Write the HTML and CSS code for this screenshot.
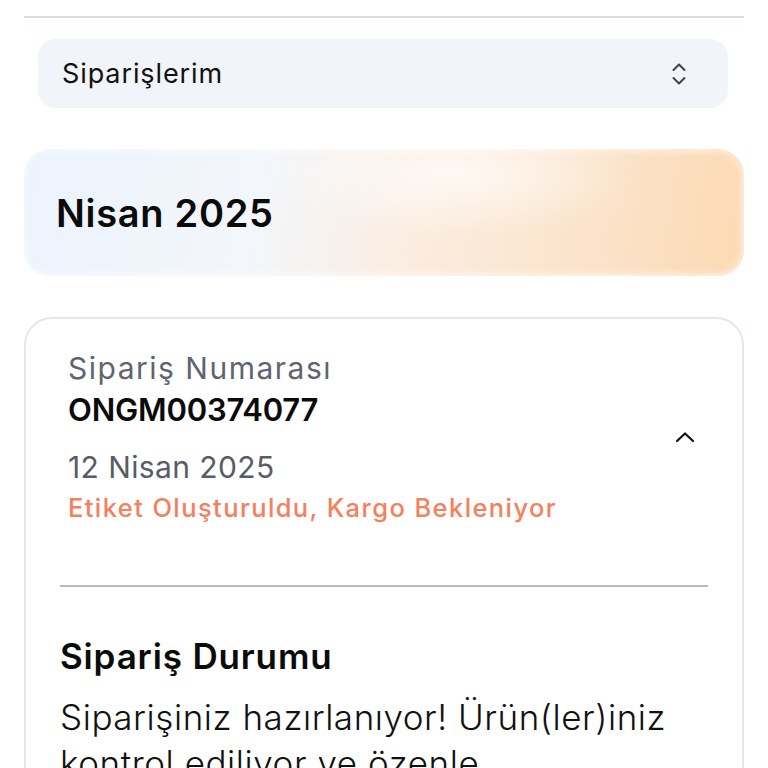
FILE: index.html
```html
<!DOCTYPE html>
<html lang="tr">
<head>
<meta charset="utf-8">
<link rel="stylesheet" href="styles.css">
</head>
<body>
<div class="page">
  <div class="topline"></div>
  <div class="select">
    <span class="select-label">Siparişlerim</span>
    <svg class="select-icon" width="18" height="26" viewBox="0 0 18 26" fill="none" stroke="#3f4247" stroke-width="2" stroke-linecap="round" stroke-linejoin="round">
      <path d="M3.5 9 L9 3.5 L14.5 9"/>
      <path d="M3.5 17 L9 22.5 L14.5 17"/>
    </svg>
  </div>
  <div class="month">
    <h2 class="month-title">Nisan 2025</h2>
  </div>
  <div class="card">
    <div class="order-head">
      <div class="order-info">
        <div class="label">Sipariş Numarası</div>
        <div class="order-no">ONGM00374077</div>
        <div class="date">12 Nisan 2025</div>
        <div class="state">Etiket Oluşturuldu, Kargo Bekleniyor</div>
      </div>
      <svg class="toggle" width="22" height="14" viewBox="0 0 22 14" fill="none" stroke="#111" stroke-width="2.2" stroke-linecap="round" stroke-linejoin="round">
        <path d="M3 11 L11 3.5 L19 11"/>
      </svg>
    </div>
    <div class="divider"></div>
    <div class="status">
      <h3 class="status-title">Sipariş Durumu</h3>
      <p class="status-text">Siparişiniz hazırlanıyor! Ürün(ler)iniz kontrol ediliyor ve özenle paketleniyor.</p>
    </div>
  </div>
</div>
</body>
</html>
```
FILE: styles.css
```css
html, body {
  margin: 0;
  padding: 0;
  background: #ffffff;
}
body {
  font-family: Inter, "Open Sans", "Liberation Sans", sans-serif;
  color: #111;
  overflow: hidden;
  height: 768px;
}
.page {
  padding: 16px 24px 0 24px;
}
.topline {
  height: 2px;
  background: #d7dde5;
}
.select {
  margin: 21px 16px 0 14px;
  height: 69px;
  border-radius: 18px;
  background: #f1f4f8;
  display: flex;
  align-items: center;
  justify-content: space-between;
  padding: 0 40px 0 24px;
}
.select-label {
  font-size: 27px;
  color: #111;
  letter-spacing: 0.9px;
}
.select-icon {
  display: block;
}
.month {
  margin-top: 41px;
  height: 127px;
  border-radius: 26px;
  background:
    radial-gradient(ellipse 26% 50% at 60% 20%, rgba(255,255,255,0.7), rgba(255,255,255,0) 100%),
    linear-gradient(100deg, #ebf3fd 0%, #f3f6fa 33%, #fbecdf 55%, #fbe3ca 78%, #fcd9b3 100%);
  display: flex;
  align-items: center;
  padding: 0 32px;
  box-shadow: 0 0 10px rgba(255,255,255,0.9) inset;
}
.month-title {
  margin: 0;
  font-size: 38px;
  font-weight: 600;
  color: #0b0b0b;
  letter-spacing: 0.7px;
}
.card {
  margin-top: 41px;
  border: 2px solid #e3e8ef;
  border-radius: 28px;
  padding: 0 34px 40px 34px;
  height: 600px;
}
.order-head {
  display: flex;
  align-items: center;
  justify-content: space-between;
  padding: 29px 12px 0 8px;
}
.label {
  font-size: 30px;
  line-height: 40px;
  color: #5f6470;
  letter-spacing: 1.5px;
}
.order-no {
  margin-top: 2px;
  font-size: 31px;
  line-height: 40px;
  font-weight: 600;
  color: #0b0b0b;
  letter-spacing: -0.2px;
}
.date {
  margin-top: 17px;
  font-size: 30px;
  line-height: 40px;
  color: #585c67;
  letter-spacing: 0.4px;
}
.state {
  margin-top: 3px;
  font-size: 25.5px;
  line-height: 36px;
  color: #f5805b;
  font-weight: 500;
  letter-spacing: 1.4px;
}
.toggle {
  display: block;
}
.divider {
  margin-top: 59px;
  height: 2px;
  background: #b9bbbe;
}
.status {
  padding-top: 46px;
}
.status-title {
  margin: 0;
  font-size: 35px;
  line-height: 46px;
  font-weight: 600;
  color: #0b0b0b;
  letter-spacing: 0.85px;
}
.status-text {
  margin: 15px 0 0 0;
  max-width: 620px;
  font-size: 35px;
  line-height: 46px;
  font-weight: 300;
  color: #111;
  letter-spacing: 0.55px;
}
```
